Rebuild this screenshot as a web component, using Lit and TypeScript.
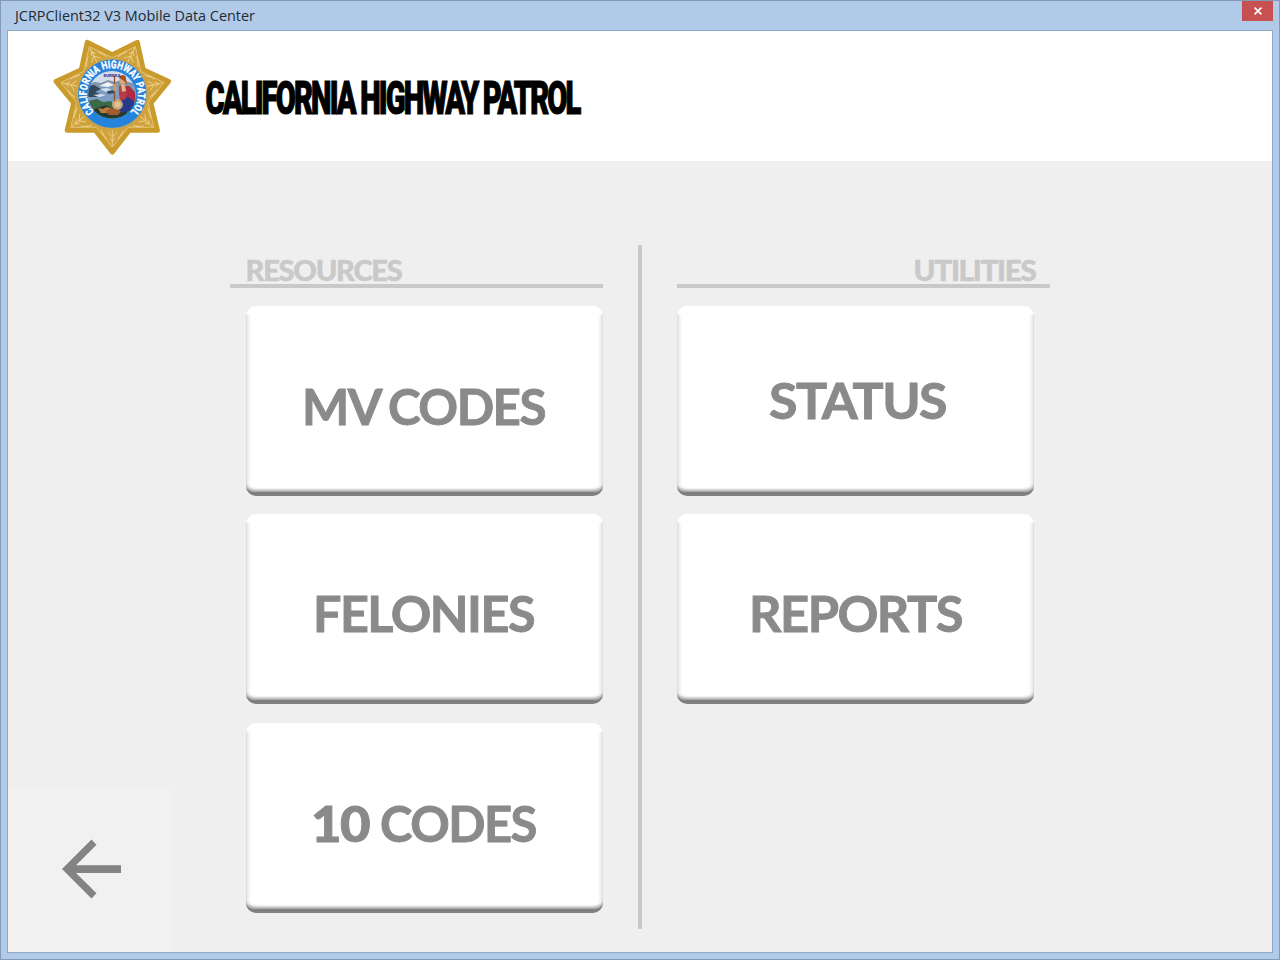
import { LitElement, html, svg, css } from "lit";
import { customElement, property } from "lit/decorators.js";

interface Word {
  text: string;
  x: number;
  width: number;
  y: number;
  heavy?: boolean;
}

const RESOURCES: Word[][] = [
  [
    { text: "MV", x: 56, width: 79, y: 119 },
    { text: "CODES", x: 142, width: 157, y: 119 },
  ],
  [{ text: "FELONIES", x: 67, width: 221, y: 118 }],
  [
    { text: "10", x: 65, width: 58, y: 119, heavy: true },
    { text: "CODES", x: 134, width: 156, y: 119 },
  ],
];

const UTILITIES: Word[][] = [
  [{ text: "STATUS", x: 92, width: 177, y: 113 }],
  [{ text: "REPORTS", x: 72, width: 213, y: 118 }],
];

const starPoints = (cx: number, cy: number, outer: number, inner: number) =>
  Array.from({ length: 14 }, (_, i) => {
    const r = i % 2 === 0 ? outer : inner;
    const a = Math.PI / 2 + (i * Math.PI) / 7;
    return `${(cx + r * Math.cos(a)).toFixed(2)},${(cy + r * Math.sin(a)).toFixed(2)}`;
  }).join(" ");

@customElement("patrol-badge")
export class PatrolBadge extends LitElement {
  static styles = css`
    :host { display: block; }
    .badge { display: block; }
    .ring { font: 700 10.6px "Roboto", "Liberation Sans", sans-serif; fill: #fff; stroke: #fff; stroke-width: 0.35px; }
    .motto { font: 700 3.4px "Roboto", sans-serif; fill: #2b2b8c; }
  `;

  render() {
    const rays = Array.from({ length: 7 }, (_, i) => svg`
      <g transform="rotate(${(i * 360) / 7} 112.3 94.3)" fill="none" stroke="#efd08c" stroke-width="0.9">
        <path d="M112.3 130V146M112.3 142l-2.5-4M112.3 142l2.5-4M112.3 137l-5-5M112.3 137l5-5M104 136l-3-6M120.6 136l3-6M107 139l-5-6M117.6 139l5-6"/>
      </g>`);
    return html`
      <svg class="badge" width="136" height="128" viewBox="45 32 136 128">
        <polygon points=${starPoints(112.3, 94.3, 58, 39.8)} fill="#c99b2b" stroke="#c99b2b" stroke-width="4.6" stroke-linejoin="round"/>
        <polygon points=${starPoints(112.3, 94.3, 53, 36.6)} fill="#cfa23c" stroke="#e6c67e" stroke-width="0.9"/>
        ${rays}
        <circle cx="112.3" cy="93.7" r="34.6" fill="#2583dc" stroke="#d9b25a" stroke-width="0.6"/>
        <defs>
          <clipPath id="seal"><circle cx="112" cy="94.8" r="23.8"/></clipPath>
          <path id="arc" d="M94 111.6A25.6 25.6 0 1 1 130.6 111.6"/>
        </defs>
        <g clip-path="url(#seal)">
          <rect x="88" y="70" width="48" height="50" fill="#d3dceb"/>
          <path d="M88 84l7-2 6 1 7-3 7 2 6-2 15 4v8H88z" fill="#8294a8"/>
          <path d="M99 86l9-4 6 3-6 2z" fill="#eef2f6"/>
          <path d="M88 87h48v18H88z" fill="#7c9cc3"/>
          <path d="M88 86l6-1 7 4-6 3 5 2-4 3h-8z" fill="#34485c"/>
          <path d="M93 95l8-1 5 1-6 2zM100 89l7-1 5 2-6 2z" fill="#d7dfea"/>
          <path d="M107 91l8-1v3l-7 1z" fill="#34485c"/>
          <path d="M88 101l9-2 6 3 8-1 4 6 9-6 12 1v19H88z" fill="#3b6a44"/>
          <path d="M94 109l12-4 7 4 14-3v14H94z" fill="#253c31"/>
          <path d="M98 108l5 1 4-2 5 2-4 4-7 0z" fill="#bd7c3c"/>
          <path d="M124 86l5 0 6 6 1 9-9 2-3-5z" fill="#b22b45"/>
          <path d="M121 99l7-2 7 5-2 8-12 3-5-5z" fill="#27398d"/>
          <path d="M119 86l5-1 3 5-1 9-6 2-1-7z" fill="#b53b47"/>
          <path d="M121 84l4 1 1 6-4 1z" fill="#e5b486"/>
          <circle cx="122.6" cy="81" r="3" fill="#e0a873"/>
          <path d="M118.5 78q3-5 7-2l1.5 8-3-3-3-2z" fill="#a4541f"/>
          <circle cx="117.5" cy="104.5" r="5.4" fill="#cda676"/>
          <circle cx="117.5" cy="104.5" r="3" fill="#e2c294"/>
          <path d="M114.5 76v25" stroke="#8a5228" stroke-width="1.3"/>
          <path d="M113.4 84h3v7h-3z" fill="#c8a06a"/>
          <path d="M106 111l5-3 10 3-3 4-9 0z" fill="#a45c2c"/>
        </g>
        <text class="motto" x="103.5" y="76.5" textLength="17" lengthAdjust="spacingAndGlyphs">EUREKA</text>
        <text class="ring"><textPath href="#arc" startOffset="0" textLength="120" lengthAdjust="spacingAndGlyphs">CALIFORNIA HIGHWAY PATROL</textPath></text>
      </svg>`;
  }
}

@customElement("menu-tile")
export class MenuTile extends LitElement {
  @property({ attribute: false }) words: Word[] = [];

  static styles = css`
    :host { display: block; }
    .tile {
      display: block; box-sizing: border-box; width: 357px; height: 190px; padding: 0;
      border: 0; border-bottom: 4px solid #808080;
      border-radius: 10px; background: #fff; overflow: hidden;
      box-shadow:
        inset 0 -4px 3px -2px #a0a0a0,
        inset 5px 0 5px -4px #cccccc,
        inset -5px 0 5px -4px #cccccc;
    }
    .cap { height: 10px; background: linear-gradient(#fff 75%, rgba(255, 255, 255, 0)); }
    .label { display: block; margin-top: -10px; }
    .word { font: 700 50px "Lato", "Open Sans", sans-serif; fill: #8a8a8a; stroke: #8a8a8a; stroke-width: 0.9px; letter-spacing: -1.5px; }
    .heavy { font-weight: 900; }
  `;

  render() {
    return html`
      <button class="tile">
        <div class="cap"></div>
        <svg class="label" width="357" height="186">
          ${this.words.map((w) => svg`<text class="word ${w.heavy ? "heavy" : ""}" x=${w.x} y=${w.y} textLength=${w.width} lengthAdjust="spacingAndGlyphs">${w.text}</text>`)}
        </svg>
      </button>`;
  }
}

@customElement("app-root")
export class AppRoot extends LitElement {
  static styles = css`
    :host { display: block; }
    * { box-sizing: border-box; }
    .window {
      display: flex; flex-direction: column; width: 1280px; height: 960px;
      background: #b0cae8; border: 1px solid #8299b8; padding: 0 6px 6px;
    }
    .titlebar { display: flex; justify-content: space-between; flex: none; height: 29px; padding-left: 7px; }
    .caption { display: block; }
    .caption-text { font: 400 15px "Open Sans", "Noto Sans", sans-serif; fill: #222a33; }
    .close {
      display: grid; place-items: center; width: 31px; height: 20px; padding: 0 0 0 1px;
      border: 0; background: #c75050;
    }
    .client { flex: 1; display: flex; flex-direction: column; border: 1px solid #8fa9c8; background: #efefef; }
    .header { flex: none; display: flex; height: 130px; background: #fff; padding: 1px 0 0 37px; }
    .name { display: block; overflow: visible; }
    .name-text { font: 900 47px "Roboto", sans-serif; fill: #000; stroke: #000; stroke-width: 1.2px; letter-spacing: -3px; }
    .body { flex: 1; display: grid; grid-template-columns: 222px 373px 35px 4px 35px 373px; align-items: start; min-height: 0; }
    .back {
      display: block; align-self: end; width: 166px; height: 166px; padding: 0;
      border: 0; background: #f1f1f1;
    }
    .back svg { display: block; }
    .column { padding-top: 95px; }
    .heading { display: block; height: 28px; overflow: visible; }
    .heading-text { font: 900 28px "Lato", "Open Sans", sans-serif; fill: #c9c9c9; stroke: #c9c9c9; stroke-width: 0.4px; letter-spacing: -1.2px; }
    .rule { height: 4px; background: #c9c9c9; }
    .tiles { display: grid; grid-template-rows: 190px 190px 190px; row-gap: 18.4px; padding-top: 18px; }
    .resources .tiles { padding-left: 16px; }
    .divider { height: 684px; margin-top: 84px; background: #c9c9c9; }
  `;

  render() {
    return html`
      <div class="window">
        <div class="titlebar">
          <svg class="caption" width="300" height="29">
            <text class="caption-text" x="1" y="20" textLength="240" lengthAdjust="spacingAndGlyphs">JCRPClient32 V3 Mobile Data Center</text>
          </svg>
          <button class="close" aria-label="Close">
            <svg width="8" height="8" viewBox="0 0 8 8"><path d="M0.6 0.6l6.8 6.8M7.4 0.6L0.6 7.4" stroke="#fff" stroke-width="1.7"/></svg>
          </button>
        </div>
        <main class="client">
          <header class="header">
            <patrol-badge></patrol-badge>
            <svg class="name" width="460" height="128">
              <text class="name-text" x="24.5" y="81.6" textLength="374" lengthAdjust="spacingAndGlyphs">CALIFORNIA HIGHWAY PATROL</text>
            </svg>
          </header>
          <div class="body">
            <button class="back" aria-label="Back">
              <svg width="166" height="166" viewBox="8 786 166 166">
                <path fill="#838383" d="M62 869L91.5 839.5 96.5 844.7 76 865.3H121V873H76L96.5 893.3 91.5 898.5Z"/>
              </svg>
            </button>
            <section class="column resources">
              <svg class="heading" width="373" height="28"><text class="heading-text" x="15.5" y="24.9" textLength="156" lengthAdjust="spacingAndGlyphs">RESOURCES</text></svg>
              <div class="rule"></div>
              <div class="tiles">${RESOURCES.map((w) => html`<menu-tile .words=${w}></menu-tile>`)}</div>
            </section>
            <span></span>
            <div class="divider"></div>
            <span></span>
            <section class="column">
              <svg class="heading" width="373" height="28"><text class="heading-text" x="236.5" y="24.9" textLength="122" lengthAdjust="spacingAndGlyphs">UTILITIES</text></svg>
              <div class="rule"></div>
              <div class="tiles">${UTILITIES.map((w) => html`<menu-tile .words=${w}></menu-tile>`)}</div>
            </section>
          </div>
        </main>
      </div>`;
  }
}
